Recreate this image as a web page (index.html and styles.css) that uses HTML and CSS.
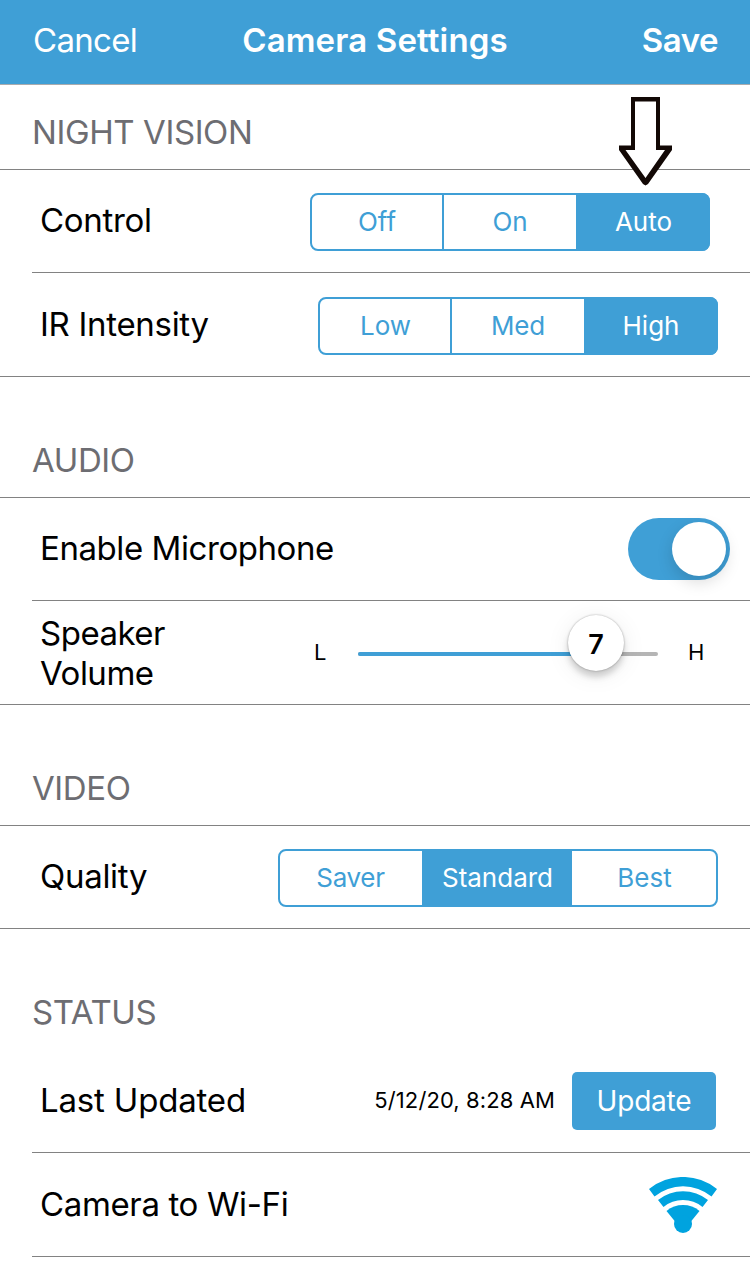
FILE: index.html
```html
<!DOCTYPE html>
<html lang="en">
<head>
<meta charset="utf-8">
<title>Camera Settings</title>
<link rel="stylesheet" href="styles.css">
</head>
<body>
<header class="navbar">
  <span class="nav-action cancel">Cancel</span>
  <h1 class="nav-title">Camera Settings</h1>
  <span class="nav-action save">Save</span>
</header>
<main>
  <section>
    <h2 class="section-title first night">NIGHT VISION</h2>
    <div class="row full">
      <div class="cell inset">
        <span class="label raised control">Control</span>
        <div class="segments shifted"><span class="segment off">Off</span><span class="segment on">On</span><span class="segment active auto">Auto</span></div>
      </div>
    </div>
    <div class="row full last">
      <div class="cell">
        <span class="label intensity">IR Intensity</span>
        <div class="segments"><span class="segment low">Low</span><span class="segment med">Med</span><span class="segment active high">High</span></div>
      </div>
    </div>
  </section>
  <section>
    <h2 class="section-title audio">AUDIO</h2>
    <div class="row">
      <div class="cell inset">
        <span class="label raised mic">Enable Microphone</span>
        <span class="toggle"><span class="toggle-knob"></span></span>
      </div>
    </div>
    <div class="row last">
      <div class="cell">
        <span class="label volume">Speaker<br>Volume</span>
        <div class="slider">
          <span class="bound">L</span>
          <div class="track"><div class="track-fill"></div><span class="thumb">7</span></div>
          <span class="bound">H</span>
        </div>
      </div>
    </div>
  </section>
  <section>
    <h2 class="section-title video">VIDEO</h2>
    <div class="row last short">
      <div class="cell">
        <span class="label raised quality">Quality</span>
        <div class="segments wide"><span class="segment saver">Saver</span><span class="segment active standard">Standard</span><span class="segment best">Best</span></div>
      </div>
    </div>
  </section>
  <section>
    <h2 class="section-title status">STATUS</h2>
    <div class="row">
      <div class="cell inset">
        <span class="label raised updated">Last Updated</span>
        <span class="date">5/12/20, 8:28 AM</span>
        <span class="update-button">Update</span>
      </div>
    </div>
    <div class="row">
      <div class="cell inset tall">
        <span class="label wifi">Camera to Wi-Fi</span>
        <svg class="wifi-icon" width="68" height="56" viewBox="0 0 68 56">
          <path d="M0 12A54 54 0 0 1 68 12L62.5 19.5A45 45 0 0 0 5.500 19.500Z"/>
          <path d="M9 23A40 40 0 0 1 59 23L53.500 30A31 31 0 0 0 14.500 30Z"/>
          <path d="M17.500 34A26 26 0 0 1 50.500 34L42 44.500H26Z"/>
          <circle cx="34" cy="47" r="9"/>
        </svg>
      </div>
    </div>
  </section>
</main>
<svg class="arrow" width="53" height="89" viewBox="0 0 53 89">
  <path class="arrow-edge" d="M12 0H41V48.500H53V53L29 87L26.500 88.500L24 87L0 53V48.500H12Z"/>
  <path class="arrow-body" d="M16 4.500H37V53H46L26.500 81L6.500 53H16Z"/>
</svg>
</body>
</html>
```
FILE: styles.css
```css
* { box-sizing: border-box; }

body {
  position: relative;
  width: 750px;
  height: 1268px;
  margin: 0;
  overflow: hidden;
  background: #fff;
  color: #000;
  font-family: Inter, "Liberation Sans", sans-serif;
  font-size: 33px;
  line-height: 40px;
}

.navbar {
  display: grid;
  grid-template-columns: 1fr auto 1fr;
  align-items: center;
  height: 85px;
  padding: 0 32px 4px;
  border-bottom: 1px solid #a9abae;
  background: #3f9fd6;
  color: #fff;
}

.nav-title { margin: 0; font-size: 33px; font-weight: 600; letter-spacing: 0.15px; }
.cancel { padding-left: 1px; letter-spacing: -0.7px; }
.save { justify-self: end; font-weight: 600; letter-spacing: -0.5px; }

.section-title {
  display: flex;
  align-items: flex-end;
  height: 121px;
  margin: 0;
  padding: 0 32px 17px;
  border-bottom: 1px solid #828282;
  color: #6d6d72;
  font-size: 33px;
  font-weight: 400;
  letter-spacing: -0.4px;
}
.section-title.first { height: 85px; }
.section-title.status { padding-bottom: 18px; border-bottom: 0; }

.row { padding-left: 32px; }
.cell {
  display: flex;
  align-items: center;
  justify-content: space-between;
  height: 103px;
  padding: 0 32px 1px 8px;
}
.cell.inset { border-bottom: 1px solid #828282; }
.cell.tall { height: 104px; }
.row.last { border-bottom: 1px solid #828282; }
.row.short .cell { height: 102px; }

.label { letter-spacing: -0.3px; }
.label.raised { padding-bottom: 2px; }
.mic { letter-spacing: -0.43px; }
.volume { padding-top: 2px; letter-spacing: -0.5px; }
.updated { letter-spacing: -0.18px; }
.wifi { letter-spacing: -0.36px; }

.segments {
  display: grid;
  grid-template-columns: 132px 132px 1fr;
  flex: none;
  width: 400px;
  height: 58px;
  margin-top: 3px;
  border: 2px solid #3f9fd6;
  border-radius: 8px;
  color: #3f9fd6;
  font-size: 26px;
}
.segments.shifted { margin-right: 8px; }
.segments.wide { grid-template-columns: 142px 150px 1fr; width: 440px; }
.segment { display: flex; align-items: center; justify-content: center; }
.segments:not(.wide) .segment:first-child { border-right: 2px solid #3f9fd6; }
.segment.active { background: #3f9fd6; color: #fff; }
.segment.active:last-child { margin: -2px -2px -2px 0; border-radius: 0 8px 8px 0; }
.auto, .low, .standard, .best { padding-left: 1px; }
.saver { padding-right: 1px; letter-spacing: -0.3px; }
.med { letter-spacing: -0.2px; }

.toggle {
  display: flex;
  align-items: center;
  justify-content: flex-end;
  width: 102px;
  height: 62px;
  margin-right: -12px;
  padding-right: 4px;
  border-radius: 31px;
  background: #3f9fd6;
}
.toggle-knob {
  width: 54px;
  height: 54px;
  border-radius: 50%;
  background: #fff;
  box-shadow: 0 6px 16px rgba(0, 0, 0, .15);
}

.slider { display: flex; align-items: center; width: 390px; margin-right: 14px; font-size: 22px; }
.bound { flex: none; width: 16px; }
.track { position: relative; flex: none; width: 300px; height: 4px; margin: 3px 30px 0 28px; border-radius: 2px; background: #b5b5b5; }
.track-fill { width: 238px; height: 4px; border-radius: 2px; background: #3f9fd6; }
.thumb {
  position: absolute;
  top: -37px;
  left: 210px;
  width: 56px;
  height: 56px;
  border-radius: 50%;
  background: #fff;
  box-shadow: 0 0 2px rgba(0, 0, 0, .35), 0 6px 6px rgba(0, 0, 0, .17), 0 4px 24px rgba(0, 0, 0, .08);
  font-size: 27px;
  font-weight: 600;
  line-height: 59px;
  text-align: center;
}

.date { margin-left: auto; padding-bottom: 2px; font-size: 22px; letter-spacing: 0.1px; }
.update-button {
  width: 144px;
  height: 58px;
  margin: 1px 2px 0 17px;
  border-radius: 5px;
  background: #3f9fd6;
  color: #fff;
  font-size: 28px;
  letter-spacing: -0.2px;
  line-height: 59px;
  text-align: center;
}

.wifi-icon { margin: 2px 1px 0 0; fill: #00a3df; }
.arrow { position: absolute; top: 97px; left: 619px; }
.arrow-edge { fill: #120805; }
.arrow-body { fill: #fff; }
```
